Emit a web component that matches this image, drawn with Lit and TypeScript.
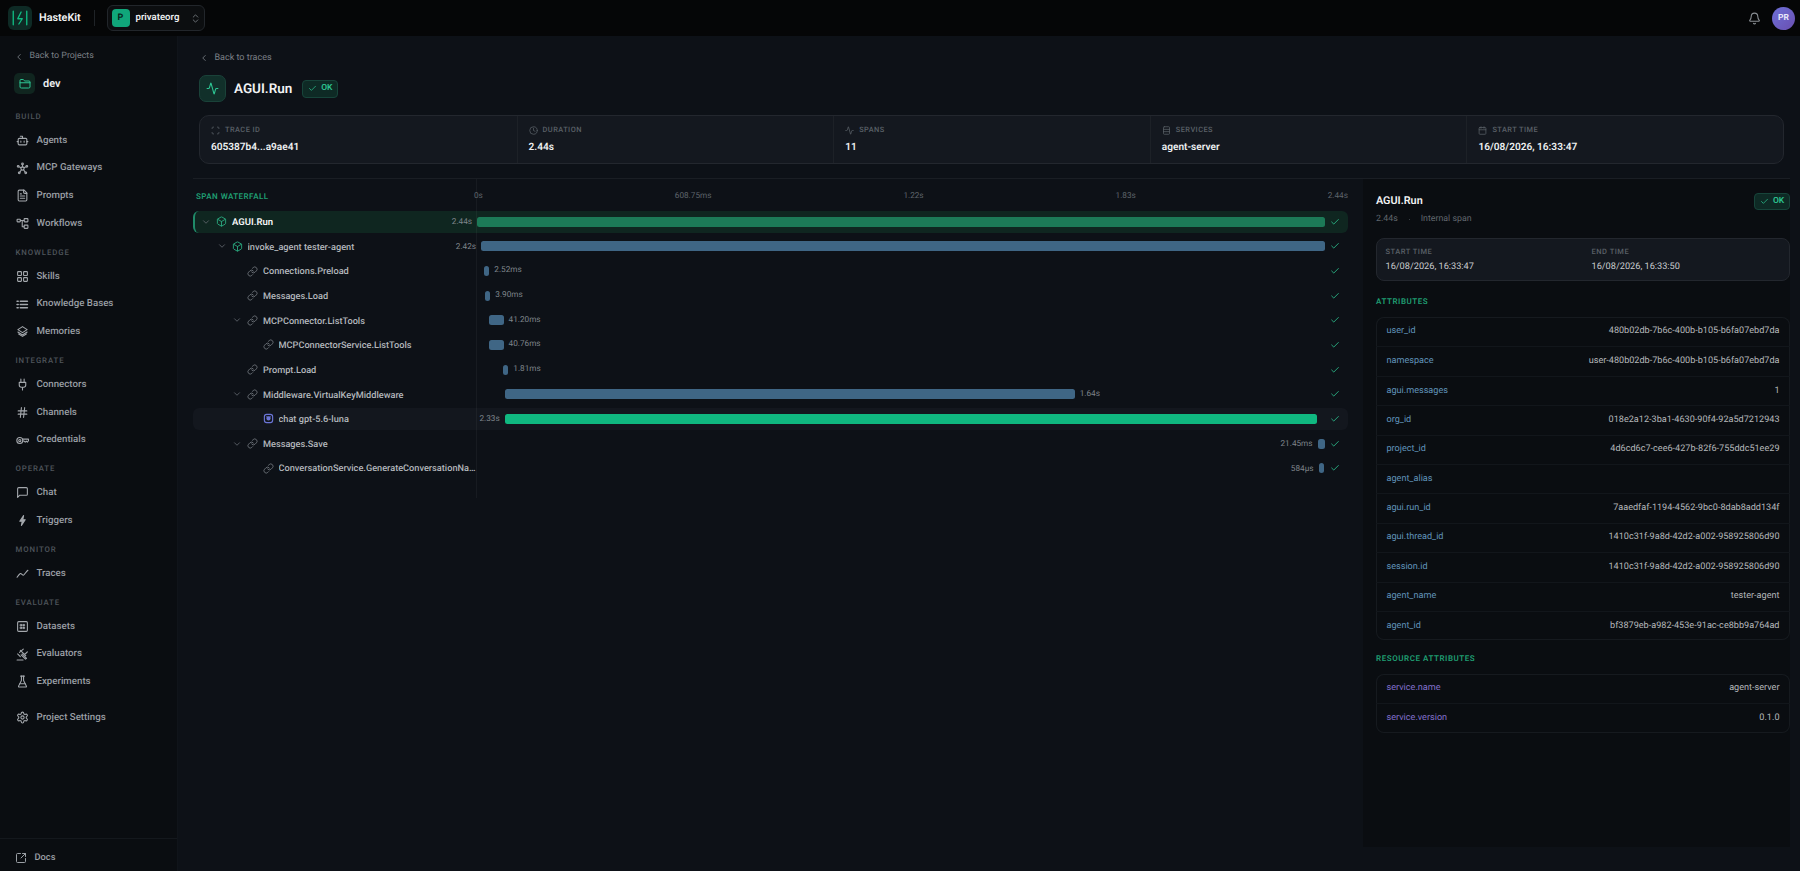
import { LitElement, html, css, svg } from "lit";
import { customElement } from "lit/decorators.js";

const P: Record<string, any> = {
  bot: svg`<path d="M12 8V4H8"/><rect width="16" height="12" x="4" y="8" rx="2"/><path d="M2 14h2M20 14h2M15 13v2M9 13v2"/>`,
  hub: svg`<circle cx="12" cy="12" r="3"/><circle cx="12" cy="3.5" r="1.6"/><circle cx="4" cy="8" r="1.6"/><circle cx="20" cy="8" r="1.6"/><circle cx="6" cy="20" r="1.6"/><circle cx="18" cy="20" r="1.6"/><path d="M12 5v4M5.5 8.8 9.4 10.6M18.5 8.8l-3.9 1.8M7 18.6l3-4M17 18.6l-3-4"/>`,
  file: svg`<path d="M15 2H6a2 2 0 0 0-2 2v16a2 2 0 0 0 2 2h12a2 2 0 0 0 2-2V7Z"/><path d="M14 2v4a2 2 0 0 0 2 2h4M10 9H8M16 13H8M16 17H8"/>`,
  flow: svg`<rect x="2" y="4" width="6" height="5" rx="1"/><rect x="15" y="3" width="7" height="6" rx="1"/><rect x="15" y="15" width="7" height="6" rx="1"/><path d="M8 6.5h7M11.5 6.5v11.5H15"/>`,
  grid: svg`<rect width="7" height="7" x="3" y="3" rx="1"/><rect width="7" height="7" x="14" y="3" rx="1"/><rect width="7" height="7" x="14" y="14" rx="1"/><rect width="7" height="7" x="3" y="14" rx="1"/>`,
  list: svg`<path d="M8 6h13M8 12h13M8 18h13" stroke-width="3"/><path d="M2 6h2M2 12h2M2 18h2" stroke-width="3"/>`,
  layers: svg`<path d="M12 3 3.5 8.5 12 14l8.500-5.500Z"/><path d="m3.500 13 8.500 5.500 8.500-5.500"/><path d="m5 16.500 7 4.500 7-4.500"/>`,
  plug: svg`<path d="M12 22v-5M9 8V2M15 8V2M18 8v5a4 4 0 0 1-4 4h-4a4 4 0 0 1-4-4V8Z"/>`,
  hash: svg`<path d="M4 9h16M4 15h16M10 3 8 21M16 3l-2 18"/>`,
  key: svg`<circle cx="7" cy="12" r="5.500"/><circle cx="7" cy="12" r="2"/><path d="M12.500 9.500H23v3l-2 2.500-2-2-2 2-2-2h-2.500"/>`,
  chat: svg`<path d="M21 15a2 2 0 0 1-2 2H7l-4 4V5a2 2 0 0 1 2-2h14a2 2 0 0 1 2 2z"/>`,
  bolt: svg`<path d="M14 3 7 13.500h4.500L10 21l7-10.500h-4.500Z" fill="currentColor"/>`,
  trend: svg`<path d="M2 19c2-3 4-6 6-7s4 4 6 3 5-7 8-9"/>`,
  table: svg`<rect width="18" height="18" x="3" y="3" rx="2"/><path d="M8 8h3v3H8zM13 8h3v3h-3zM8 13h3v3H8zM13 13h3v3h-3z" fill="currentColor" stroke-width="1"/>`,
  gavel: svg`<path d="m9.500 12.500 8 8 2-1.500-8-8"/><path d="m8 16-5-5M6.500 8l7-6M16 12l5-5M8 4.500 18 14"/><path d="M2 22h11"/>`,
  flask: svg`<path d="M10 2v7.527a2 2 0 0 1-.211.896L4.720 20.550a1 1 0 0 0 .9 1.450h12.760a1 1 0 0 0 .9-1.450l-5.069-10.127A2 2 0 0 1 14 9.527V2"/><path d="M8.500 2h7M7 16h10"/>`,
  gear: svg`<path d="M12.220 2h-.44a2 2 0 0 0-2 2v.18a2 2 0 0 1-1 1.730l-.43.25a2 2 0 0 1-2 0l-.15-.08a2 2 0 0 0-2.730.73l-.22.38a2 2 0 0 0 .73 2.730l.15.1a2 2 0 0 1 1 1.720v.51a2 2 0 0 1-1 1.740l-.15.09a2 2 0 0 0-.73 2.730l.22.38a2 2 0 0 0 2.730.73l.15-.08a2 2 0 0 1 2 0l.43.25a2 2 0 0 1 1 1.730V20a2 2 0 0 0 2 2h.44a2 2 0 0 0 2-2v-.18a2 2 0 0 1 1-1.730l.43-.25a2 2 0 0 1 2 0l.15.08a2 2 0 0 0 2.730-.73l.22-.39a2 2 0 0 0-.73-2.730l-.15-.08a2 2 0 0 1-1-1.740v-.5a2 2 0 0 1 1-1.740l.15-.09a2 2 0 0 0 .73-2.730l-.22-.38a2 2 0 0 0-2.730-.73l-.15.08a2 2 0 0 1-2 0l-.43-.25a2 2 0 0 1-1-1.730V4a2 2 0 0 0-2-2z"/><circle cx="12" cy="12" r="3"/>`,
  ext: svg`<path d="M21 13v6a2 2 0 0 1-2 2H5a2 2 0 0 1-2-2V5a2 2 0 0 1 2-2h6"/><path d="m21 3-9 9M15 3h6v6"/>`,
  folder: svg`<path d="M20 20a2 2 0 0 0 2-2V8a2 2 0 0 0-2-2h-7.900a2 2 0 0 1-1.690-.9L9.600 3.900A2 2 0 0 0 7.930 3H4a2 2 0 0 0-2 2v13a2 2 0 0 0 2 2Z"/><path d="M2 9.500h20"/>`,
  left: svg`<path d="m15 18-6-6 6-6"/>`,
  down: svg`<path d="m6 9 6 6 6-6"/>`,
  updown: svg`<path d="m7 15 5 5 5-5M7 9l5-5 5 5"/>`,
  activity: svg`<path d="M22 12h-2.480a2 2 0 0 0-1.930 1.460l-2.350 8.360a.25.25 0 0 1-.48 0L9.240 2.180a.25.25 0 0 0-.48 0l-2.350 8.360A2 2 0 0 1 4.490 12H2"/>`,
  check: svg`<path d="M20 6 9 17l-5-5"/>`,
  scan: svg`<path d="M3 7V5a2 2 0 0 1 2-2h2M17 3h2a2 2 0 0 1 2 2v2M21 17v2a2 2 0 0 1-2 2h-2M7 21H5a2 2 0 0 1-2-2v-2"/>`,
  clock: svg`<circle cx="12" cy="12" r="10"/><path d="M12 6v6l4 2"/>`,
  server: svg`<rect x="4" y="2" width="16" height="20" rx="2"/><path d="M4 9h16M4 15h16"/>`,
  cal: svg`<path d="M8 2v4M16 2v4"/><rect width="18" height="18" x="3" y="4" rx="2"/><path d="M3 10h18"/>`,
  box: svg`<path d="M21 8a2 2 0 0 0-1-1.730l-7-4a2 2 0 0 0-2 0l-7 4A2 2 0 0 0 3 8v8a2 2 0 0 0 1 1.730l7 4a2 2 0 0 0 2 0l7-4A2 2 0 0 0 21 16Z"/><path d="m3.300 7 8.700 5 8.700-5M12 22V12"/>`,
  link: svg`<path d="M10 13a5 5 0 0 0 7.540.54l3-3a5 5 0 0 0-7.070-7.070l-1.720 1.710"/><path d="M14 11a5 5 0 0 0-7.540-.54l-3 3a5 5 0 0 0 7.070 7.070l1.710-1.710"/>`,
  llm: svg`<rect x="3" y="3" width="18" height="18" rx="5" stroke-width="2.500"/><circle cx="12" cy="12" r="4.500" fill="currentColor" stroke-width="0"/><path d="M7.500 8.500h9" stroke-width="2"/>`,
  bell: svg`<path d="M10.268 21a2 2 0 0 0 3.464 0"/><path d="M3.262 15.326A1 1 0 0 0 4 17h16a1 1 0 0 0 .74-1.673C19.410 13.956 18 12.499 18 8A6 6 0 0 0 6 8c0 4.499-1.411 5.956-2.738 7.326"/>`,
};

const ic = (n: string, cls = "") =>
  html`<svg class="ic ${cls}" viewBox="0 0 24 24" fill="none" stroke="currentColor" stroke-width="2" stroke-linecap="round" stroke-linejoin="round">${P[n]}</svg>`;

const NAV = [
  { t: "BUILD", items: [["bot", "Agents"], ["hub", "MCP Gateways"], ["file", "Prompts"], ["flow", "Workflows"]] },
  { t: "KNOWLEDGE", items: [["grid", "Skills"], ["list", "Knowledge Bases"], ["layers", "Memories"]] },
  { t: "INTEGRATE", items: [["plug", "Connectors"], ["hash", "Channels"], ["key", "Credentials"]] },
  { t: "OPERATE", items: [["chat", "Chat"], ["bolt", "Triggers"]] },
  { t: "MONITOR", items: [["trend", "Traces"]] },
  { t: "EVALUATE", items: [["table", "Datasets"], ["gavel", "Evaluators"], ["flask", "Experiments"]] },
];

const STATS = [
  ["scan", "TRACE ID", "605387b4...a9ae41"],
  ["clock", "DURATION", "2.44s"],
  ["activity", "SPANS", "11"],
  ["server", "SERVICES", "agent-server"],
  ["cal", "START TIME", "16/08/2026, 16:33:47"],
];

type Span = { n: string; d: number; c?: boolean; i: string; l: number; w: number; dur: string; side: "l" | "r"; col: string; cls?: string };
const SPANS: Span[] = [
  { n: "AGUI.Run", d: 0, c: true, i: "box", l: 0, w: 848, dur: "2.44s", side: "l", col: "#1c7a57", cls: "sel" },
  { n: "invoke_agent tester-agent", d: 1, c: true, i: "box", l: 4, w: 844, dur: "2.42s", side: "l", col: "#3f6685" },
  { n: "Connections.Preload", d: 2, i: "link", l: 7.300, w: 5, dur: "2.52ms", side: "r", col: "#3f6685" },
  { n: "Messages.Load", d: 2, i: "link", l: 8.300, w: 5, dur: "3.90ms", side: "r", col: "#3f6685" },
  { n: "MCPConnector.ListTools", d: 2, c: true, i: "link", l: 12.300, w: 14.300, dur: "41.20ms", side: "r", col: "#3f6685" },
  { n: "MCPConnectorService.ListTools", d: 3, i: "link", l: 12.300, w: 14.300, dur: "40.76ms", side: "r", col: "#3f6685" },
  { n: "Prompt.Load", d: 2, i: "link", l: 26.300, w: 5, dur: "1.81ms", side: "r", col: "#3f6685" },
  { n: "Middleware.VirtualKeyMiddleware", d: 2, c: true, i: "link", l: 27.700, w: 570, dur: "1.64s", side: "r", col: "#3f6685" },
  { n: "chat gpt-5.6-luna", d: 3, i: "llm", l: 27.700, w: 812, dur: "2.33s", side: "l", col: "#10b981", cls: "hl" },
  { n: "Messages.Save", d: 2, c: true, i: "link", l: 840.500, w: 7, dur: "21.45ms", side: "l", col: "#3f6685" },
  { n: "ConversationService.GenerateConversationName", d: 3, i: "link", l: 841.500, w: 5, dur: "584μs", side: "l", col: "#3f6685" },
];

const ATTRS = [
  ["user_id", "480b02db-7b6c-400b-b105-b6fa07ebd7da"],
  ["namespace", "user-480b02db-7b6c-400b-b105-b6fa07ebd7da"],
  ["agui.messages", "1"],
  ["org_id", "018e2a12-3ba1-4630-90f4-92a5d7212943"],
  ["project_id", "4d6cd6c7-cee6-427b-82f6-755ddc51ee29"],
  ["agent_alias", ""],
  ["agui.run_id", "7aaedfaf-1194-4562-9bc0-8dab8add134f"],
  ["agui.thread_id", "1410c31f-9a8d-42d2-a002-958925806d90"],
  ["session.id", "1410c31f-9a8d-42d2-a002-958925806d90"],
  ["agent_name", "tester-agent"],
  ["agent_id", "bf3879eb-a982-453e-91ac-ce8bb9a764ad"],
];
const RES = [["service.name", "agent-server"], ["service.version", "0.1.0"]];

@customElement("app-root")
export class AppRoot extends LitElement {
  static styles = css`
    :host { display: block; height: 871px; overflow: hidden; background: #0d1117; color: #e6e8ea;
      font-family: Roboto, "Liberation Sans", sans-serif; font-size: 11px; line-height: 1.2; text-rendering: geometricPrecision; }
    * { box-sizing: border-box; }
    .ic { display: block; flex: none; width: 12px; height: 12px; }
    .top { height: 36px; background: #050607; display: flex; align-items: center; padding: 0 5px 0 8px; }
    .logo { width: 24px; height: 24px; border-radius: 6px; background: #0e2a25; display: flex; align-items: center; justify-content: center; color: #10b981; }
    .logo svg { width: 18px; height: 18px; }
    .brand { margin-left: 7px; font-size: 10.800px; font-weight: 600; color: #f2f3f4; width: 55px; white-space: nowrap; }
    .vsep { width: 1px; height: 16px; background: #1f2327; margin-right: 11.500px; }
    .org { width: 98px; height: 26px; border: 1px solid #22262b; border-radius: 6px; background: #0c0e10; display: flex; align-items: center; padding-left: 4px; }
    .org b { width: 18px; height: 18px; border-radius: 4px; background: #10a67a; color: #06241b; font-size: 9px; font-weight: 700; display: flex; align-items: center; justify-content: center; }
    .org span { margin-left: 6px; font-size: 9.600px; font-weight: 600; color: #eceeef; width: 51px; white-space: nowrap; }
    .org .ic { width: 11px; height: 11px; color: #71767b; margin-left: 3px; }
    .spacer { flex: 1; }
    .bell { color: #8a8f94; width: 13px; height: 13px; margin-right: 11.500px; }
    .av { width: 23px; height: 23px; border-radius: 50%; background: linear-gradient(135deg, #6d70d8, #6a4fb0); color: #e9e8fb; font-size: 8.5px; font-weight: 700; display: flex; align-items: center; justify-content: center; }
    .body { display: flex; height: 835px; }
    .side { width: 178px; flex: none; background: #0a0d11; border-right: 1px solid #10141a; display: flex; flex-direction: column; padding-top: 11px; }
    .back { display: flex; align-items: center; height: 18px; padding-top: 1px; color: #7a7f85; font-size: 8.900px; white-space: nowrap; }
    .back .ic { width: 10px; height: 10px; }
    .side .back { padding-left: 14px; gap: 5.500px; }
    .proj { display: flex; align-items: center; height: 21px; margin: 8px 0 7px 14px; gap: 8px; font-size: 11px; font-weight: 600; color: #eef0f1; }
    .proj i { width: 21px; height: 21px; border-radius: 5px; background: #10251f; display: flex; align-items: center; justify-content: center; color: #2dc593; }
    .sec { height: 12px; margin: 10px 0 3.200px 15.500px; font-size: 7.800px; line-height: 12px; font-weight: 500; letter-spacing: .9px; color: #4f555c; }
    .item { height: 27.700px; padding-top: 1px; display: flex; align-items: center; padding-left: 15.500px; gap: 8px; color: #9a9fa5; font-size: 9.700px; font-weight: 500; white-space: nowrap; }
    .item .ic { width: 13px; height: 13px; color: #a4a8ad; }
    .item.set { margin-top: 8px; }
    .docs { margin-top: auto; height: 33px; padding-top: 5px; border-top: 1px solid #14181d; display: flex; align-items: center; padding-left: 14.500px; gap: 8px; color: #9a9fa5; font-size: 9.300px; font-weight: 500; }
    .docs .ic { width: 12px; height: 12px; }
    .main { flex: 1; min-width: 0; display: flex; flex-direction: column; padding: 12px 10px 24px 15px; }
    .head { padding: 0 6px; }
    .main .back { gap: 5.500px; font-size: 9px; padding-top: 2.500px; }
    .title { display: flex; align-items: center; height: 27px; margin-top: 9px; }
    .tic { width: 27px; height: 27px; border-radius: 7px; background: #11302a; border: 1px solid #1a4239; color: #2dc593; display: flex; align-items: center; justify-content: center; }
    .tic .ic { width: 13px; height: 13px; }
    h1 { margin: 1.500px 0 0 8px; font-size: 13.500px; font-weight: 600; color: #f2f3f4; }
    .ok { display: inline-flex; align-items: center; justify-content: center; gap: 4px; width: 36px; height: 18px; border-radius: 4px; background: #0e2a25; border: 1px solid #17443a; color: #2cc08e; font-size: 8.500px; font-weight: 600; }
    .ok .ic { width: 9px; height: 9px; }
    .title .ok { margin-left: 10px; }
    .stats { display: grid; grid-template-columns: repeat(5, 1fr); height: 49px; margin-top: 13px; background: #14181f; border: 1px solid #23272e; border-radius: 10px; }
    .stat { padding: 8px 0 0 11px; border-left: 1px solid #1d2127; }
    .stat:first-child { border-left: 0; }
    .lab { display: flex; align-items: center; gap: 5px; height: 12px; font-size: 7.400px; font-weight: 500; letter-spacing: .45px; color: #5a6067; }
    .lab .ic { width: 9px; height: 9px; }
    .val { margin-top: 6px; font-size: 10.100px; font-weight: 600; color: #eef0f1; white-space: nowrap; }
    .split { flex: 1; min-height: 0; display: flex; margin-top: 14px; border-top: 1px solid #1a1e24; }
    .wf { width: 1155px; flex: none; margin-right: 15px; position: relative; }
    .vline { position: absolute; left: 283px; top: 0; height: 319px; width: 1px; background: rgba(255,255,255,.045); z-index: 2; }
    .wh { height: 31.700px; display: flex; align-items: center; padding-top: 3.300px; }
    .wt { width: 281px; padding-left: 3px; font-size: 8px; font-weight: 600; letter-spacing: .45px; color: #1f9d72; white-space: nowrap; }
    .axis { flex: 1; display: flex; justify-content: space-between; padding-top: .5px; font-size: 8.200px; color: #5f656c; }
    .rows { display: flex; flex-direction: column; gap: 2.670px; }
    .row { height: 22px; display: flex; align-items: center; border-radius: 6px; }
    .row.sel { background: #0f2620; border-left: 2px solid #1f8a68; }
    .row.sel .name { margin-left: -2px; }
    .row.hl { background: #13171e; }
    .name { width: 284px; flex: none; display: flex; align-items: center; min-width: 0; font-size: 9.200px; font-weight: 500; color: #b3b7bc; }
    .sel .name { color: #f4f5f6; font-weight: 600; font-size: 9.500px; }
    .chev { width: 10px; height: 10px; color: #62686f; margin-right: 5px; flex: none; }
    .chev .ic { width: 10px; height: 10px; }
    .sic { width: 11px; height: 11px; color: #6a7076; margin-right: 5px; }
    .sic.box { color: #2aa77e; }
    .sic.llm { color: #6b75d6; }
    .lbl { overflow: hidden; text-overflow: ellipsis; white-space: nowrap; flex: 1; min-width: 0; padding: 1.500px 1px 0 0; }
    .track { width: 848px; flex: none; display: flex; align-items: center; height: 10px; }
    .bar { height: 10px; border-radius: 2.500px; position: relative; flex: none; }
    .dur { font-size: 8.200px; color: #7f858b; white-space: nowrap; margin-left: 5px; padding-top: .5px; }
    .bar .dur { position: absolute; right: 100%; top: 0; line-height: 10px; margin: 0 5px 0 0; }
    .ck { flex: 1; display: flex; justify-content: center; color: #2cc08e; padding-right: 2.500px; }
    .ck .ic { width: 10px; height: 10px; }
    .panel { flex: 1; min-width: 0; background: #0a0d11; padding: 14px 0 0 13px; }
    .ph { display: flex; align-items: center; justify-content: space-between; height: 17px; font-size: 10.800px; font-weight: 600; color: #f2f3f4; }
    .ph .ok { height: 17px; }
    .sub { margin-top: 3px; height: 12px; display: flex; gap: 11px; align-items: center; font-size: 8.800px; color: #61676e; }
    .sub s { width: 1px; height: 1px; background: #3a3f45; }
    .times { display: grid; grid-template-columns: 1fr 1fr; height: 43px; margin-top: 13px; background: #14181f; border: 1px solid #23272e; border-radius: 8px; }
    .times div { padding: 7px 0 0 8.500px; }
    .times small { display: block; font-size: 7.500px; line-height: 12px; font-weight: 500; letter-spacing: .5px; color: #5a6067; }
    .times span { display: block; margin-top: 2.500px; font-size: 9.200px; color: #c9cccf; white-space: nowrap; }
    .ptl { height: 12px; line-height: 12px; margin-top: 15px; font-size: 8px; font-weight: 600; letter-spacing: .55px; color: #1f9d72; white-space: nowrap; }
    .tbl + .ptl { margin-top: 13px; }
    .tbl { margin-top: 9px; box-shadow: inset 0 0 0 1px #161a1f; border-radius: 8px; }
    .res { margin-top: 8.700px; }
    .tr { height: 29.400px; display: flex; align-items: center; justify-content: space-between; padding: 0 10.500px; border-top: 1px solid #12161b; font-size: 9.100px; }
    .tr:first-child { border-top: 0; }
    .k { color: #6094bb; }
    .res .k { color: #8270cc; }
    .v { color: #b5b8bb; white-space: nowrap; }
  `;

  private logo() {
    return html`<svg viewBox="0 0 24 24" fill="none" stroke="currentColor" stroke-width="1.800" stroke-linecap="round" stroke-linejoin="round"><path d="M3 3v18M21 3v18"/><path d="M13.500 4 9 13h6l-4.500 7"/></svg>`;
  }

  private span(s: Span) {
    const label = html`<span class="dur">${s.dur}</span>`;
    return html`<div class="row ${s.cls ?? ""}">
      <div class="name" style="padding-left:${8 + s.d * 15.500}px">
        <span class="chev">${s.c ? ic("down") : ""}</span>
        ${ic(s.i, `sic ${s.i}`)}
        <span class="lbl">${s.n}</span>
      </div>
      <div class="track">
        <div class="bar" style="margin-left:${s.l}px;width:${s.w}px;background:${s.col}">${s.side === "l" ? label : ""}</div>
        ${s.side === "r" ? label : ""}
      </div>
      <div class="ck">${ic("check")}</div>
    </div>`;
  }

  render() {
    return html`
      <div class="top">
        <div class="logo">${this.logo()}</div>
        <div class="brand">HasteKit</div>
        <div class="vsep"></div>
        <div class="org"><b>P</b><span>privateorg</span>${ic("updown")}</div>
        <div class="spacer"></div>
        ${ic("bell", "bell")}
        <div class="av">PR</div>
      </div>
      <div class="body">
        <aside class="side">
          <div class="back">${ic("left")}Back to Projects</div>
          <div class="proj"><i>${ic("folder")}</i>dev</div>
          ${NAV.map((g) => html`<div class="sec">${g.t}</div>
            ${g.items.map((it) => html`<div class="item">${ic(it[0])}${it[1]}</div>`)}`)}
          <div class="item set">${ic("gear")}Project Settings</div>
          <div class="docs">${ic("ext")}Docs</div>
        </aside>
        <main class="main">
          <div class="head">
            <div class="back">${ic("left")}Back to traces</div>
            <div class="title">
              <div class="tic">${ic("activity")}</div>
              <h1>AGUI.Run</h1>
              <span class="ok">${ic("check")}OK</span>
            </div>
            <div class="stats">
              ${STATS.map((s) => html`<div class="stat"><div class="lab">${ic(s[0])}${s[1]}</div><div class="val">${s[2]}</div></div>`)}
            </div>
          </div>
          <div class="split">
            <section class="wf">
              <div class="vline"></div>
              <div class="wh">
                <div class="wt">SPAN WATERFALL</div>
                <div class="axis"><span>0s</span><span>608.75ms</span><span>1.22s</span><span>1.83s</span><span>2.44s</span></div>
              </div>
              <div class="rows">${SPANS.map((s) => this.span(s))}</div>
            </section>
            <section class="panel">
              <div class="ph">AGUI.Run<span class="ok">${ic("check")}OK</span></div>
              <div class="sub"><span>2.44s</span><s></s><span>Internal span</span></div>
              <div class="times">
                <div><small>START TIME</small><span>16/08/2026, 16:33:47</span></div>
                <div><small>END TIME</small><span>16/08/2026, 16:33:50</span></div>
              </div>
              <div class="ptl">ATTRIBUTES</div>
              <div class="tbl">${ATTRS.map((a) => html`<div class="tr"><span class="k">${a[0]}</span><span class="v">${a[1]}</span></div>`)}</div>
              <div class="ptl">RESOURCE ATTRIBUTES</div>
              <div class="tbl res">${RES.map((a) => html`<div class="tr"><span class="k">${a[0]}</span><span class="v">${a[1]}</span></div>`)}</div>
            </section>
          </div>
        </main>
      </div>
    `;
  }
}
